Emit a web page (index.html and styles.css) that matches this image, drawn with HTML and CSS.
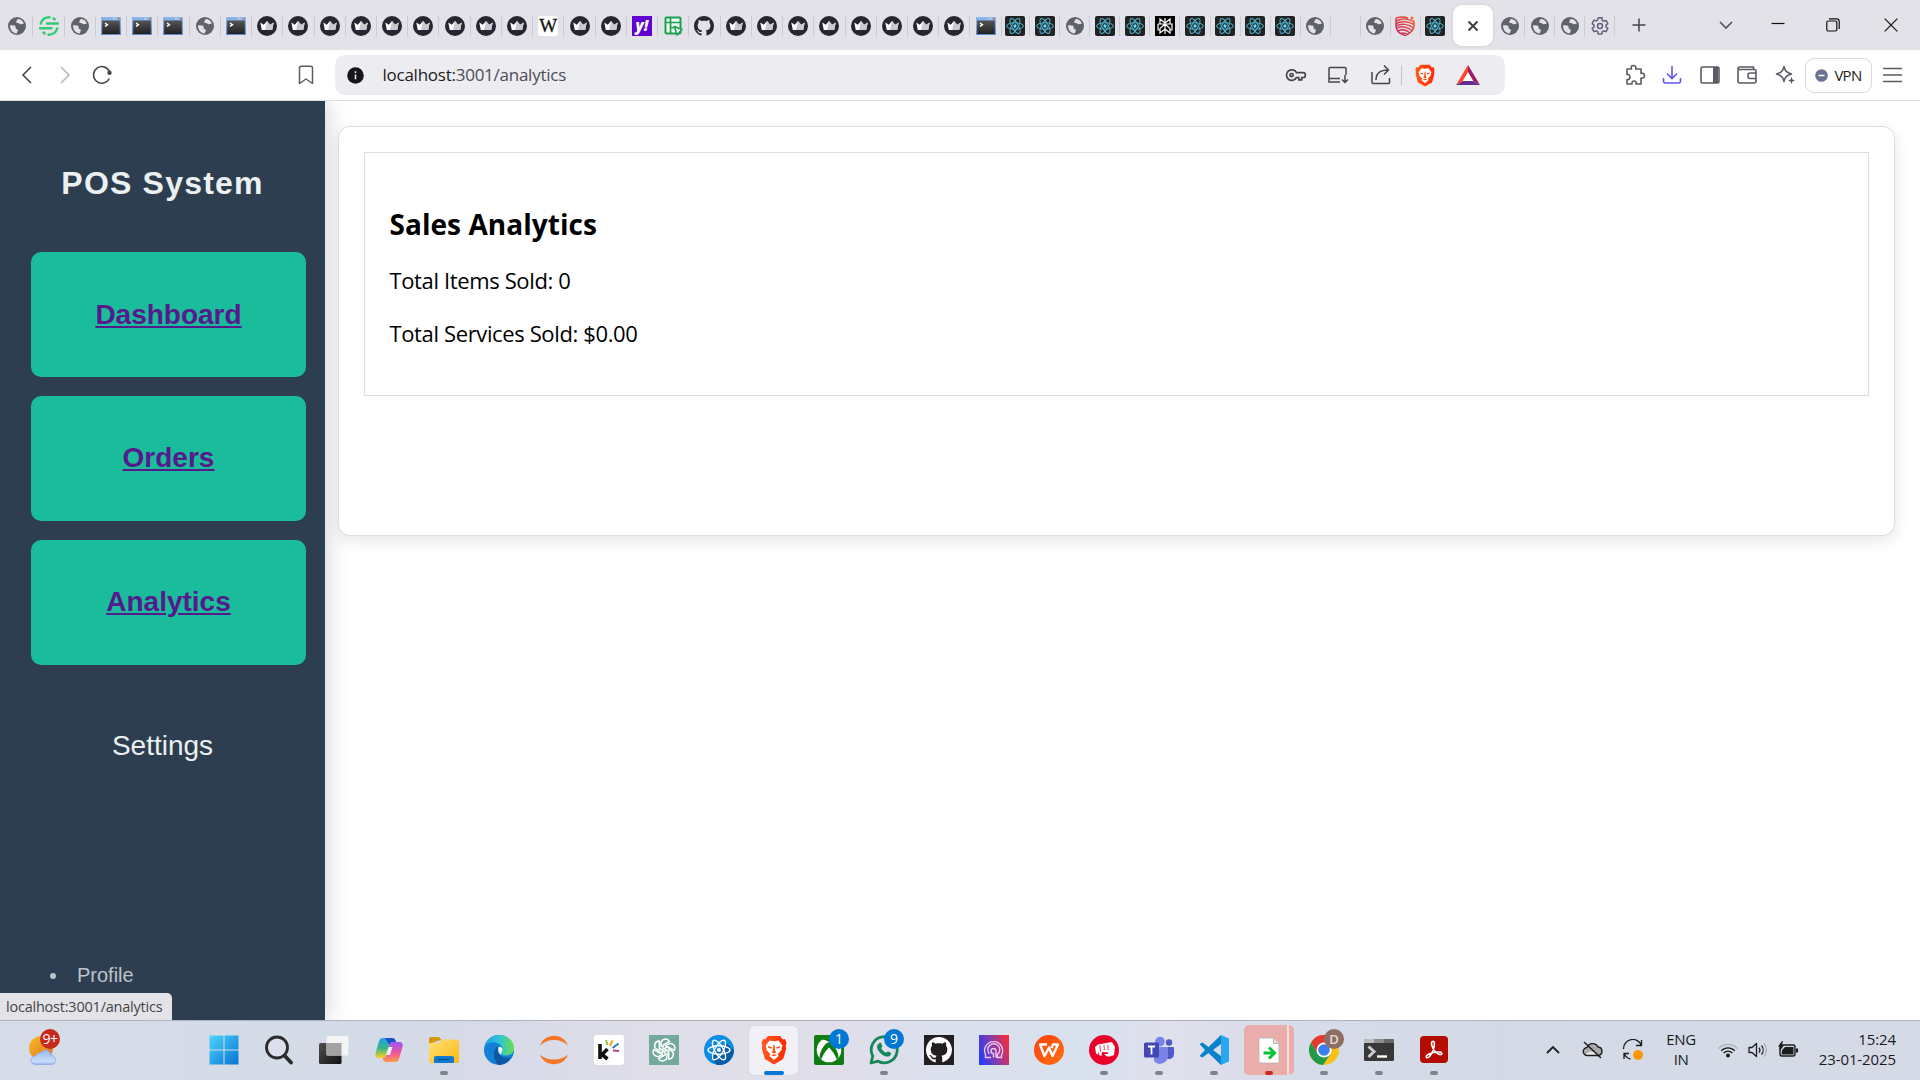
FILE: index.html
```html
<!DOCTYPE html>
<html lang="en">
<head>
<meta charset="utf-8">
<title>POS System - Sales Analytics</title>
<link rel="stylesheet" href="styles.css">
</head>
<body>
<svg class="sprite" width="0" height="0" aria-hidden="true">
  <defs>
    <linearGradient id="g-title" x1="0" x2="0" y1="0" y2="1"><stop offset="0" stop-color="#8db8ee"/><stop offset="1" stop-color="#5d8bd0"/></linearGradient>
    <linearGradient id="g-term" x1="0" x2="0" y1="0" y2="1"><stop offset="0" stop-color="#555"/><stop offset="1" stop-color="#222"/></linearGradient>
    <linearGradient id="g-red" x1="0" x2="1" y1="1" y2="0"><stop offset="0" stop-color="#b52a78"/><stop offset=".5" stop-color="#e24148"/><stop offset="1" stop-color="#fa5f3a"/></linearGradient>
    <linearGradient id="g-win" x1="0" x2="1" y1="0" y2="1"><stop offset="0" stop-color="#4fd5fc"/><stop offset="1" stop-color="#0573d2"/></linearGradient>
    <linearGradient id="g-brave" x1="0" x2="1"><stop offset="0" stop-color="#ff5a1e"/><stop offset="1" stop-color="#ff2a00"/></linearGradient>
    <linearGradient id="g-cop1" x1="0" x2="0" y1="0" y2="1"><stop offset="0" stop-color="#1fa3e8"/><stop offset=".5" stop-color="#35b48c"/><stop offset="1" stop-color="#ffd21e"/></linearGradient>
    <linearGradient id="g-cop2" x1="0" x2="0" y1="0" y2="1"><stop offset="0" stop-color="#9a55f0"/><stop offset=".55" stop-color="#f0559b"/><stop offset="1" stop-color="#ff9a4a"/></linearGradient>
    <linearGradient id="g-fold" x1="0" x2="1" y1="0" y2="1"><stop offset="0" stop-color="#ffe07a"/><stop offset="1" stop-color="#fbb90e"/></linearGradient>
    <linearGradient id="g-edge" x1="0" x2="1"><stop offset="0" stop-color="#1f9fe0"/><stop offset=".5" stop-color="#2bc4d8"/><stop offset="1" stop-color="#69e04c"/></linearGradient>
    <linearGradient id="g-purple" x1="0" x2="1" y1=".6" y2=".3"><stop offset="0" stop-color="#2a3df5"/><stop offset=".5" stop-color="#8a3aa8"/><stop offset="1" stop-color="#f52b3c"/></linearGradient>
    <linearGradient id="g-dark" x1="0" x2="1" y1="0" y2="1"><stop offset="0" stop-color="#505050"/><stop offset="1" stop-color="#111"/></linearGradient>
    <linearGradient id="g-sun" x1="0" x2="1" y1="0" y2="1"><stop offset="0" stop-color="#f5c02e"/><stop offset="1" stop-color="#ea6a10"/></linearGradient>
    <linearGradient id="g-cloud" x1="0" x2="0" y1="0" y2="1"><stop offset="0" stop-color="#8fb4ee"/><stop offset=".5" stop-color="#b9d2f7"/><stop offset=".8" stop-color="#c9dcf8"/><stop offset="1" stop-color="#8fb4ee"/></linearGradient>
    <linearGradient id="g-wps" x1="0" x2="1" y1="0" y2="1"><stop offset="0" stop-color="#ff3d10"/><stop offset="1" stop-color="#ff7410"/></linearGradient>
  </defs>
  <symbol id="globe" viewBox="0 0 20 20"><circle cx="10" cy="10" r="9" fill="#5f6368"/><path d="M3.1 9.2c2.3.3 4.5-.2 5.200.9.8 1.200-.3 1.800.7 2.700 1 .8 2 .3 1.900 1.800-.1 1-1 1.300-1.100 2.900C5.800 17.300 2.700 13.500 3.100 9.200zM10.400 3.100c.5 1.100-1 1.500-1.200 2.700-.1.900.8 1.400 1.900 1.300 1.200 0 1.300 1 2.400 1.100 1 .2 2.100-.6 3.300-.3C16.200 5 13.500 3.100 10.400 3.100z" fill="#e3e2e8"/></symbol>
  <symbol id="term" viewBox="0 0 20 20"><rect x="0" y="1" width="20" height="18" fill="url(#g-title)"/><path d="M12 2.700h2M15 2.700h1" stroke="#dce8f8"/><path d="M17 2.700h1.600" stroke="#e0584a" stroke-width="1.400"/><rect x="1.200" y="4.500" width="17.600" height="13.500" fill="url(#g-term)"/><path d="M4 7l2.500 1.700L4 10.400" fill="none" stroke="#fff" stroke-width="1.400"/></symbol>
  <symbol id="crown" viewBox="0 0 20 20"><circle cx="10" cy="10" r="10" fill="#262632"/><path d="M3.300 6.500l3.500 2.300L10 5l3.200 3.800 3.500-2.300-1.500 7.500H4.800z" fill="#fff"/><path d="M10 5l3.200 3.800 3.500-2.300-1.500 7.500H8z" fill="#c9c9cf"/></symbol>
  <symbol id="react" viewBox="0 0 20 20"><rect width="20" height="20" rx="2" fill="#222"/><g fill="none" stroke="#4fb6d2" stroke-width="1"><ellipse cx="10" cy="10" rx="8.400" ry="3.200"/><ellipse cx="10" cy="10" rx="8.400" ry="3.200" transform="rotate(60 10 10)"/><ellipse cx="10" cy="10" rx="8.400" ry="3.200" transform="rotate(120 10 10)"/></g><circle cx="10" cy="10" r="1.700" fill="#61dafb"/></symbol>
  <symbol id="green-s" viewBox="0 0 20 20"><g fill="none" stroke="#2ecc71" stroke-width="2.400" stroke-linecap="round"><path d="M1.800 7.500C3 3.500 6.500 1.300 10.500 1.300M18.200 12.500c-1.200 4-4.700 6.200-8.700 6.200M8 7.500h11M1 12.300h11.500M14.500 2.500l1.200.8M4.500 16.500l1.100.9"/></g></symbol>
  <symbol id="sheet" viewBox="0 0 20 20"><rect x="2.500" y="1.500" width="15" height="16" rx="1" fill="#eaf8ef" stroke="#1d9f4f" stroke-width="2"/><path d="M3 6.500h14M7.500 2v15M7.500 11.500h5" stroke="#1d9f4f" stroke-width="1.700"/><path d="M11.500 10.500l7.500 3-5 5.500z" fill="#eaf8ef" stroke="#1d9f4f" stroke-width="1.600" stroke-linejoin="round"/></symbol>
  <symbol id="github" viewBox="0 0 16 16"><path fill="currentColor" d="M8 0C3.580 0 0 3.580 0 8c0 3.540 2.290 6.530 5.470 7.590.4.070.55-.17.55-.38 0-.19-.01-.82-.01-1.490-2.010.37-2.530-.49-2.690-.94-.09-.23-.48-.94-.82-1.130-.28-.15-.68-.52-.01-.53.63-.01 1.080.58 1.230.82.72 1.210 1.870.87 2.330.66.070-.52.28-.87.51-1.070-1.780-.2-3.640-.89-3.640-3.950 0-.87.31-1.590.82-2.150-.08-.2-.36-1.020.08-2.120 0 0 .67-.21 2.200.82.640-.18 1.320-.27 2-.27s1.360.09 2 .27c1.530-1.040 2.200-.82 2.200-.82.440 1.100.16 1.920.08 2.120.51.560.82 1.270.82 2.150 0 3.070-1.870 3.750-3.650 3.950.29.25.54.73.54 1.480 0 1.070-.01 1.930-.01 2.200 0 .21.15.46.55.38A8.010 8.010 0 0 0 16 8c0-4.420-3.580-8-8-8z"/></symbol>
  <symbol id="perp" viewBox="0 0 20 20"><rect width="20" height="20" fill="#000"/><path d="M10 2v16M10 7L5 3v4.500M10 7l5-4v4.500M3 8h14v6h-2M3 8v6h2M10 8l-5 4.500V17l5-4M10 8l5 4.500V17l-5-4" fill="none" stroke="#fff" stroke-width="1.200"/></symbol>
  <symbol id="redshield" viewBox="0 0 20 20"><g fill="none" stroke="url(#g-red)" stroke-width="1.500"><path d="M1 2c5-1.500 9-1 12 0M1 5c5-2.500 12-2.500 18 .5M1 7.500c5-3 13-2 18 1M1 10C6 7 14 8 18.500 12M1.500 12.500c4-3 11-2 16 2.500M3 15c4-2.500 8-1.500 12 2M5.500 17.500c2.500-1 5-.5 7 1M1 2v8c0 5 4 8 9 9.500 5-2 9-5 9-10V5"/></g><circle cx="17" cy="2" r="1.500" fill="#fa5f3a"/></symbol>
  <symbol id="gear" viewBox="0 0 24 24"><path d="M19.140 12.940c.04-.3.060-.61.060-.94s-.02-.64-.07-.94l2.030-1.580a.49.49 0 0 0 .12-.61l-1.920-3.320a.49.49 0 0 0-.59-.22l-2.390.96c-.5-.38-1.030-.7-1.620-.94l-.36-2.540A.48.48 0 0 0 13.920 2h-3.840c-.24 0-.43.17-.47.41l-.36 2.540c-.59.24-1.130.57-1.620.94l-2.390-.96a.48.48 0 0 0-.59.22L2.740 8.870a.47.47 0 0 0 .12.61l2.030 1.580a6.100 6.100 0 0 0 0 1.880l-2.030 1.580a.49.49 0 0 0-.12.61l1.920 3.320c.12.22.37.29.59.22l2.390-.96c.5.38 1.030.7 1.620.94l.36 2.540c.05.24.24.41.48.41h3.840c.24 0 .44-.17.47-.41l.36-2.540c.59-.24 1.130-.56 1.620-.94l2.390.96c.22.080.47 0 .59-.22l1.920-3.320a.47.47 0 0 0-.12-.61z" fill="none" stroke="#62617d" stroke-width="1.800"/><circle cx="12" cy="12" r="3" fill="none" stroke="#62617d" stroke-width="1.800"/></symbol>
  <symbol id="brave" viewBox="0 0 26 30"><path d="M7 1h12l3 3.500 2-.5 1.500 4-.8 2.500.5 3-3 10.500L13 29.500 3.800 24 .8 13.500l.5-3L.5 8 2 4l2 .5z" fill="url(#g-brave)"/><path d="M13 6.300l4.500-.8 4 5.200-1 2.300.2 1.800-4 4.400 1 1.800-4.700 4-4.700-4 1-1.800-4-4.400.2-1.800-1-2.300 4-5.200z" fill="#fff"/><path d="M6.800 11l4 1.200-.3 1.600-3-.8zM19.200 11l-4 1.200.3 1.600 3-.8zM12.400 10h1.200l.5 6 1.400 1.300-2.500 1.200-2.500-1.200 1.400-1.300zM10 20.300l3-1 3 1-3 .9z" fill="#ff4a10"/></symbol>
</svg>

<div class="screen">
  <header class="tabstrip">
    <div class="tabs tabs-wide">
      <span class="tab"><svg><use href="#globe"/></svg></span>
      <span class="tab"><svg><use href="#green-s"/></svg></span>
      <span class="tab"><svg><use href="#globe"/></svg></span>
      <span class="tab"><svg><use href="#term"/></svg></span>
      <span class="tab"><svg><use href="#term"/></svg></span>
      <span class="tab"><svg><use href="#term"/></svg></span>
      <span class="tab"><svg><use href="#globe"/></svg></span>
      <span class="tab"><svg><use href="#term"/></svg></span>
      <span class="tab"><svg><use href="#crown"/></svg></span>
      <span class="tab"><svg><use href="#crown"/></svg></span>
      <span class="tab"><svg><use href="#crown"/></svg></span>
      <span class="tab"><svg><use href="#crown"/></svg></span>
      <span class="tab"><svg><use href="#crown"/></svg></span>
      <span class="tab"><svg><use href="#crown"/></svg></span>
      <span class="tab"><svg><use href="#crown"/></svg></span>
      <span class="tab"><svg><use href="#crown"/></svg></span>
      <span class="tab"><svg><use href="#crown"/></svg></span>
      <span class="tab"><span class="fav-wiki">W</span></span>
      <span class="tab"><svg><use href="#crown"/></svg></span>
      <span class="tab"><svg><use href="#crown"/></svg></span>
      <span class="tab"><span class="fav-yahoo">y!</span></span>
      <span class="tab"><svg><use href="#sheet"/></svg></span>
      <span class="tab fav-github"><svg><use href="#github"/></svg></span>
      <span class="tab"><svg><use href="#crown"/></svg></span>
      <span class="tab"><svg><use href="#crown"/></svg></span>
      <span class="tab"><svg><use href="#crown"/></svg></span>
      <span class="tab"><svg><use href="#crown"/></svg></span>
      <span class="tab"><svg><use href="#crown"/></svg></span>
      <span class="tab"><svg><use href="#crown"/></svg></span>
      <span class="tab"><svg><use href="#crown"/></svg></span>
      <span class="tab"><svg><use href="#crown"/></svg></span>
      <span class="tab"><svg><use href="#term"/></svg></span>
    </div>
    <div class="tabs tabs-narrow tabs-before">
      <span class="tab"><svg><use href="#react"/></svg></span>
      <span class="tab"><svg><use href="#react"/></svg></span>
      <span class="tab"><svg><use href="#globe"/></svg></span>
      <span class="tab"><svg><use href="#react"/></svg></span>
      <span class="tab"><svg><use href="#react"/></svg></span>
      <span class="tab"><svg><use href="#perp"/></svg></span>
      <span class="tab"><svg><use href="#react"/></svg></span>
      <span class="tab"><svg><use href="#react"/></svg></span>
      <span class="tab"><svg><use href="#react"/></svg></span>
      <span class="tab"><svg><use href="#react"/></svg></span>
      <span class="tab"><svg><use href="#globe"/></svg></span>
      <span class="tab"></span>
      <span class="tab"><svg><use href="#globe"/></svg></span>
      <span class="tab"><svg><use href="#redshield"/></svg></span>
      <span class="tab tab-noline"><svg><use href="#react"/></svg></span>
    </div>
    <div class="tab-active"><svg width="12" height="12" viewBox="0 0 12 12"><path d="M1.500 1.500l9 9M10.500 1.500l-9 9" stroke="#3b3b45" stroke-width="1.900"/></svg></div>
    <div class="tabs tabs-narrow">
      <span class="tab"><svg><use href="#globe"/></svg></span>
      <span class="tab"><svg><use href="#globe"/></svg></span>
      <span class="tab"><svg><use href="#globe"/></svg></span>
      <span class="tab"><svg><use href="#gear"/></svg></span>
    </div>
    <svg class="new-tab" width="14" height="14" viewBox="0 0 14 14"><path d="M7 .5v13M.5 7h13" stroke="#45454d" stroke-width="1.500"/></svg>
    <div class="window-controls">
      <svg width="14" height="14" viewBox="0 0 14 14"><path d="M1 4l6 6 6-6" fill="none" stroke="#55555c" stroke-width="1.700"/></svg>
      <svg width="14" height="14" viewBox="0 0 14 14"><path d="M.5 5.500h13" stroke="#111" stroke-width="1.200"/></svg>
      <svg width="14" height="14" viewBox="0 0 14 14"><rect x=".8" y="3" width="10" height="10" rx="1.500" fill="none" stroke="#111" stroke-width="1.200"/><path d="M3 .8h7.500a2.700 2.700 0 0 1 2.700 2.700V11" fill="none" stroke="#111" stroke-width="1.200"/></svg>
      <svg width="14" height="14" viewBox="0 0 14 14"><path d="M.7.7l12.600 12.600M13.300.7L.7 13.300" stroke="#111" stroke-width="1.200"/></svg>
    </div>
  </header>

  <nav class="toolbar">
    <div class="nav-buttons">
      <svg width="20" height="20" viewBox="0 0 20 20"><path d="M14 2L6 10l8 8" fill="none" stroke="#45454d" stroke-width="1.600"/></svg>
      <svg width="20" height="20" viewBox="0 0 20 20"><path d="M6 2l8 8-8 8" fill="none" stroke="#b9b9bf" stroke-width="1.600"/></svg>
      <svg width="20" height="20" viewBox="0 0 20 20"><path d="M17.300 13.500A8.300 8.300 0 1 1 17.600 7" fill="none" stroke="#45454d" stroke-width="1.500"/><circle cx="17.500" cy="7.800" r="2.200" fill="#45454d"/></svg>
    </div>
    <svg class="bookmark" width="20" height="20" viewBox="0 0 20 20"><path d="M3.500 18.500V3a1.800 1.800 0 0 1 1.800-1.800h9.400A1.800 1.800 0 0 1 16.500 3v15.500L10 14z" fill="none" stroke="#5b5b63" stroke-width="1.500" stroke-linejoin="round"/></svg>
    <div class="address">
      <svg width="17" height="17" viewBox="0 0 17 17"><circle cx="8.500" cy="8.500" r="8.300" fill="#16161b"/><path d="M8.500 7.500v4.700M8.500 4.200v1.800" stroke="#ededf1" stroke-width="1.600"/></svg>
      <span class="url"><b>localhost:</b>3001/analytics</span>
      <div class="address-actions">
        <svg width="22" height="22" viewBox="0 0 22 22"><g fill="none" stroke="#45454d" stroke-width="1.700"><path d="M11.500 8.700A5.300 5.300 0 1 0 11.500 13.500h2.300v2.300h3v-2.300h1.500a2 2 0 0 0 2-2v-.800a2 2 0 0 0-2-2z"/><circle cx="6.600" cy="11.100" r="1.600"/></g></svg>
        <svg width="22" height="22" viewBox="0 0 22 22"><path d="M19 11V4.500A1 1 0 0 0 18 3.500H3A1 1 0 0 0 2 4.500V18h11M2 14.500h11M18 11v7M15 15.500l3 3 3-3" fill="none" stroke="#45454d" stroke-width="1.500"/></svg>
        <svg width="22" height="22" viewBox="0 0 22 22"><path d="M2 8v10.500a1 1 0 0 0 1 1h15.500a1 1 0 0 0 1-1V14M6 16c0-6 4-10 12-10M14 1.500L18.500 6 14 10.500" fill="none" stroke="#45454d" stroke-width="1.500"/></svg>
      </div>
      <i class="address-line"></i>
      <svg class="brave-btn" width="20" height="23"><use href="#brave"/></svg>
      <svg class="bat" width="24" height="20" viewBox="0 0 24 20"><path d="M12 0L0 20l7-4 5-8.500z" fill="#ff4724"/><path d="M12 0l12 20-7-4-5-8.500z" fill="#9e1f63"/><path d="M0 20h24l-7-4H7z" fill="#662d91"/><path d="M12 7l5.200 9H6.800z" fill="#fff"/></svg>
    </div>
    <div class="extensions">
      <svg width="22" height="22" viewBox="0 0 22 22"><path d="M3 5h4.500C6.500 2 8 1.500 9.500 1.500S12.500 2.500 11.700 5H17v4.500c3-.8 3.500 1 3.500 2.300s-1 3-3.500 2.200V20h-5c.5-2.500-.8-3-2-3s-2.500.8-2 3H3v-4.500c2.300.3 3-1 3-2.500s-1-3-3-2.500z" fill="none" stroke="#5b5b63" stroke-width="1.600" stroke-linejoin="round"/></svg>
      <svg width="22" height="22" viewBox="0 0 22 22"><path d="M11 2v12M6 9.500l5 5 5-5M2.500 14v3a2 2 0 0 0 2 2h13a2 2 0 0 0 2-2v-3" fill="none" stroke="#6159e8" stroke-width="1.600"/></svg>
      <svg width="22" height="22" viewBox="0 0 22 22"><rect x="2" y="3" width="18" height="16" rx="1.500" fill="none" stroke="#5b5b63" stroke-width="1.600"/><path d="M14 3h5v16h-5z" fill="#5b5b63"/></svg>
      <svg width="22" height="22" viewBox="0 0 22 22"><path d="M20 9V7a1.500 1.500 0 0 0-1.500-1.500H2M20 14.500V17a2 2 0 0 1-2 2H4a2 2 0 0 1-2-2V5a2 2 0 0 1 2-2h13.500v2.500M20 9h-6a2 2 0 0 0-2 2v1.500a2 2 0 0 0 2 2h6z" fill="none" stroke="#5b5b63" stroke-width="1.600"/></svg>
      <svg width="22" height="22" viewBox="0 0 22 22"><path d="M10 2.500c1 4.500 2.500 6 7.500 7.500-5 1.500-6.500 3-7.500 7.500C9 13 7.500 11.500 2.500 10 7.500 8.500 9 7 10 2.500z" fill="none" stroke="#5b5b63" stroke-width="1.500" stroke-linejoin="round"/><path d="M17.500 13l1 2.500 2.500 1-2.500 1-1 2.500-1-2.500-2.500-1 2.500-1z" fill="#5b5b63"/></svg>
    </div>
    <div class="vpn"><svg width="13" height="13" viewBox="0 0 13 13"><circle cx="6.500" cy="6.500" r="6.300" fill="#6b7394"/><path d="M3.500 6.500h6" stroke="#fff" stroke-width="1.500"/></svg><span>VPN</span></div>
    <svg class="menu" width="19" height="16" viewBox="0 0 19 16"><path d="M0 1.500h19M0 8h19M0 14.500h19" stroke="#5b5b63" stroke-width="1.500"/></svg>
  </nav>

  <div class="page">
    <aside class="sidebar">
      <h1>POS System</h1>
      <div class="side-cards">
        <div class="side-card"><a href="#">Dashboard</a></div>
        <div class="side-card"><a href="#">Orders</a></div>
        <div class="side-card"><a href="#">Analytics</a></div>
      </div>
      <h3>Settings</h3>
      <ul><li>Profile</li></ul>
      <div class="status">localhost:3001/analytics</div>
    </aside>
    <main class="content">
      <section class="panel">
        <div class="analytics">
          <h2>Sales Analytics</h2>
          <p>Total Items Sold: 0</p>
          <p>Total Services Sold: $0.00</p>
        </div>
      </section>
    </main>
  </div>

  <footer class="taskbar">
    <div class="weather">
      <svg width="36" height="40" viewBox="0 0 36 40"><circle cx="15" cy="22" r="12" fill="url(#g-sun)"/><path d="M10 38.500C3 38.500 3.500 30.500 9.500 30c1-2.500 3-3.500 5-3 3-5 9.500-3.500 10.500 2 6.500 1.500 6.500 9.500-.5 9.500z" fill="url(#g-cloud)" stroke="#86abea" stroke-width=".8"/></svg>
      <span class="weather-badge">9+</span>
    </div>
    <div class="apps">
      <span class="app"><svg width="30" height="30" viewBox="0 0 30 30"><path d="M.5.500h14v14H.5zM15.500.5h14v14h-14zM.5 15.500h14v14H.5zM15.500 15.500h14v14h-14z" fill="url(#g-win)"/></svg></span>
      <span class="app"><svg width="30" height="30" viewBox="0 0 30 30"><circle cx="13" cy="12.500" r="10.500" fill="#dfe3ee" fill-opacity=".6" stroke="#2b2b2b" stroke-width="2.800"/><path d="M20.500 20.500l6.500 7" stroke="#2b2b2b" stroke-width="3.800" stroke-linecap="round"/></svg></span>
      <span class="app"><svg width="30" height="30" viewBox="0 0 30 30"><rect x="0" y="8" width="22.500" height="21" rx="1.500" fill="url(#g-dark)"/><rect x="7.500" y="1" width="22" height="19.500" rx="1.500" fill="#f4f4f4"/><path d="M7.500 8h15v12.500h-15z" fill="#a3a3a3"/></svg></span>
      <span class="app"><svg width="30" height="30" viewBox="0 0 30 30"><path d="M9 3h9c2.500 0 3.500 2 4 4h-3c-2 0-3 1-3.500 3l-3 10c-.6 2-1.500 3-4 3H5c-3 0-4-2-3.400-5L5 6c.7-2 2-3 4-3z" fill="url(#g-cop1)"/><path d="M11 3h7c2.500 0 3.500 2 4 4h-3c-2 0-3 1-3.500 3z" fill="#1b50c8"/><path d="M21 27h-9c-2 0-3-2-3.500-4 2.500 0 3.500-1 4-3l3-10c.6-2 1.500-3 4-3H25c3 0 4.300 2 3.500 5L25 24c-.7 2-2 3-4 3z" fill="url(#g-cop2)"/><path d="M14.500 12h4l-2.500 8h-4z" fill="#eef0f8"/></svg></span>
      <span class="app running"><svg width="30" height="30" viewBox="0 0 30 30"><path d="M0 4a2 2 0 0 1 2-2h8l3 3.500h-3L0 9z" fill="#d9980a"/><path d="M0 8h10l3-3.500h15a2 2 0 0 1 2 2V26a2 2 0 0 1-2 2H2a2 2 0 0 1-2-2z" fill="url(#g-fold)"/><path d="M5 28v-5a2 2 0 0 1 2-2h16a2 2 0 0 1 2 2v5z" fill="#0f7ad0"/><path d="M9 24.500h12" stroke="#0a4f94" stroke-width="1.200"/></svg></span>
      <span class="app"><svg width="30" height="30" viewBox="0 0 30 30"><circle cx="15" cy="15" r="15" fill="#137fd6"/><path d="M.5 12C2 4.500 8 0 15 0c8.500 0 15 6 15 13 0 5-3.500 7.500-8 7.500-3.500 0-5.500-1-5-2.500 1-1.500 1.800-2.500 1.500-4.500C18 10 14 7.500 9.500 7.500 5 7.500 2 9.500.5 12z" fill="url(#g-edge)"/><path d="M10 19c0-4 1.500-6.500 4.500-8-1 2-1 4.500 0 7 2 4.500 7.500 6 12.500 4-2.500 5-7 8-12 8-3-1.500-5-6-5-11z" fill="#0f57a5"/><path d="M14.500 12c2-.5 3.500.5 4 2 .2 1.500-.5 2.700-1.400 4-.3.900.2 1.600 1.200 2-3-.3-5-4-3.800-8z" fill="#eef3fa"/></svg></span>
      <span class="app"><svg width="30" height="30" viewBox="0 0 30 30"><path d="M1 10.500C3 4.500 8.500.7 15 .7s12 3.800 14 9.800C25.500 7 20.500 5 15 5S4.500 7 1 10.500zM1 19.500c2 6 7.500 9.800 14 9.800s12-3.800 14-9.800c-3.500 3.500-8.500 5-14 5s-10.500-1.500-14-5z" fill="#f37726"/></svg></span>
      <span class="app"><svg width="30" height="30" viewBox="0 0 30 30"><rect width="30" height="30" rx="3" fill="#fff"/><path d="M6 9v15M13.500 14L8 19.500l5.500 4.500" fill="none" stroke="#111" stroke-width="3.600"/><path d="M12 5l1.500 5" stroke="#8bc53f" stroke-width="2"/><path d="M18.500 5.500L16 11" stroke="#f7a51c" stroke-width="2"/><path d="M24.500 8.500L18.500 13" stroke="#2b7fc3" stroke-width="2"/><path d="M25 16l-6-.5" stroke="#b8418f" stroke-width="2"/></svg></span>
      <span class="app"><svg width="30" height="30" viewBox="0 0 30 30"><rect width="30" height="30" fill="#74aa9c"/><g fill="none" stroke="#fff" stroke-width="1.500"><path id="petal" d="M12 12.300V8.500a4.500 4.500 0 0 1 8.500-2l-6.500 3.700v4.500"/><use href="#petal" transform="rotate(60 15 15)"/><use href="#petal" transform="rotate(120 15 15)"/><use href="#petal" transform="rotate(180 15 15)"/><use href="#petal" transform="rotate(240 15 15)"/><use href="#petal" transform="rotate(300 15 15)"/></g></svg></span>
      <span class="app"><svg width="30" height="30" viewBox="0 0 30 30"><circle cx="15" cy="15" r="15" fill="#0b8de6"/><path d="M6 22l16-14 8 7a15 15 0 0 1-17 15z" fill="#075da8"/><g fill="none" stroke="#fff" stroke-width="1.400"><ellipse cx="15" cy="15" rx="11" ry="4.200"/><ellipse cx="15" cy="15" rx="11" ry="4.200" transform="rotate(60 15 15)"/><ellipse cx="15" cy="15" rx="11" ry="4.200" transform="rotate(120 15 15)"/></g><circle cx="15" cy="15" r="2" fill="#fff"/></svg></span>
      <span class="app active"><svg width="26" height="30"><use href="#brave"/></svg></span>
      <span class="app"><svg width="30" height="30" viewBox="0 0 30 30"><rect width="30" height="30" rx="2" fill="#107c10"/><circle cx="15" cy="15" r="12.300" fill="#fff"/><path d="M8 4.800c2.500-.5 5 .8 7 2.200 2-1.400 4.500-2.700 7-2.200C20 3 17.500 2.500 15 2.500S10 3 8 4.800zM11.500 9C7.500 13.500 5.500 18.500 5.500 22.500l1.700 2C8.500 20.500 11.500 16 15 12.500c3.500 3.500 6.500 8 7.800 12l1.700-2c0-4-2-9-6-13.500L15 7z" fill="#107c10"/></svg><b class="badge">1</b></span>
      <span class="app running"><svg width="30" height="30" viewBox="0 0 30 30"><path d="M2 28l1.800-7A13 13 0 1 1 9 26.200z" fill="none" stroke="#16865a" stroke-width="2.800" stroke-linejoin="round"/><path d="M10.500 8c1-.4 1.700 0 2 1l.8 2.200c.1.600-.8 1.300-1.200 1.800 1 2.200 2.700 3.800 5 4.800.6-.5 1.200-1.600 1.900-1.400l2.500 1.200c.8.500.5 1.800 0 2.600-2 2.500-6 1-8.500-.8S8.300 14.700 8 12c0-1.500.9-3.400 2.500-4z" fill="#16865a"/></svg><b class="badge">9</b></span>
      <span class="app"><svg class="gh" width="30" height="30" viewBox="0 0 30 30"><rect width="30" height="30" fill="#231f20"/><use href="#github" x="2" y="2" width="26" height="26"/></svg></span>
      <span class="app"><svg width="30" height="30" viewBox="0 0 30 30"><rect width="30" height="30" fill="url(#g-purple)"/><path d="M12 22.500H6.500v-3a9 9 0 1 1 16 .5v2.500h-5M10.500 19a6 6 0 1 1 8 .5v3M14.500 22.500v-4a2.500 2.500 0 1 1 2.500-2.500v6.500" fill="none" stroke="#f3c6ee" stroke-width="1.400"/></svg></span>
      <span class="app"><svg width="30" height="30" viewBox="0 0 30 30"><circle cx="15" cy="15" r="15" fill="url(#g-wps)"/><path d="M13 9.500H6L10.500 21 15 12.500 18.500 21 24 9.500h-5l-1.500 3.500" fill="none" stroke="#fff" stroke-width="2.400" stroke-linejoin="round"/></svg></span>
      <span class="app running"><svg width="30" height="30" viewBox="0 0 30 30"><circle cx="15" cy="15" r="15" fill="#eb0029"/><path d="M6 12l3-2.500L23 7l3 5-1 8-4 1.500h-3L15 19h4v-1.500l-6-.5-.5 4-2.500-1-.5-4-.5 3.500-2-1z" fill="#fff"/><path d="M11 10.500l.5 6M15 10l.3 5M19 9.500V15" stroke="#eb0029" stroke-width=".8"/></svg></span>
      <span class="app running"><svg width="30" height="30" viewBox="0 0 30 30"><circle cx="16" cy="6.500" r="4.800" fill="#7b83eb"/><circle cx="25" cy="7.500" r="3.200" fill="#5059c9"/><path d="M22 12h7a1 1 0 0 1 1 1v6a5 5 0 0 1-8 4z" fill="#5059c9"/><path d="M10 12h14v8a8 8 0 0 1-14 6z" fill="#7b83eb"/><rect x="0" y="7.500" width="15" height="15" rx="1.500" fill="#4248b3"/><path d="M4 11.500h7M7.500 11.500v8" stroke="#fff" stroke-width="1.800"/></svg></span>
      <span class="app running"><svg width="30" height="30" viewBox="0 0 30 30"><path d="M22 0L9.500 12 3.500 7.500.5 9l5.500 6-5.500 6 3 1.500 6-4.500L22 30V21l-8-6 8-6z" fill="#0a82cc"/><path d="M22 0l8 3.500v23L22 30z" fill="#2aa6f2"/></svg></span>
      <span class="app alert"><svg width="30" height="30" viewBox="0 0 30 30"><path d="M5 3h14.500L25 8.500V28H5z" fill="#fff" stroke="#b8b0ac" stroke-width=".8"/><path d="M19.500 3v5.500H25" fill="#ddd" stroke="#aaa" stroke-width=".8"/><path d="M9.500 18h10M15 12.500l5.500 5.500-5.500 5.500" fill="none" stroke="#0ac232" stroke-width="3"/></svg></span>
      <span class="app running"><svg width="30" height="30" viewBox="0 0 30 30"><circle cx="15" cy="15" r="15" fill="#fbc116"/><path d="M2 7.500A15 15 0 0 1 28 7.500H15L8.500 18.700z" fill="#e33b2e"/><path d="M2 7.500A15 15 0 0 0 14 30l7.500-11.300h-13z" fill="#229a4c"/><circle cx="15" cy="15" r="7.500" fill="#fff"/><circle cx="15" cy="15" r="5.800" fill="#3b7ded"/></svg><b class="badge badge-user">D</b></span>
      <span class="app running"><svg width="30" height="30" viewBox="0 0 30 30"><rect x="0" y="4" width="30" height="22" rx="1.500" fill="#383838"/><path d="M0 8V5.500A1.500 1.500 0 0 1 1.500 4H10v4z" fill="#bdbdbd"/><path d="M10 4h10v4H10z" fill="#8d8d8d"/><path d="M20 4h8.500A1.500 1.500 0 0 1 30 5.500V8H20z" fill="#686868"/><path d="M4.500 11.500l5.500 5-5.500 5.500" fill="none" stroke="#ccc" stroke-width="3"/><path d="M13 21.500h10" stroke="#fff" stroke-width="2.400"/></svg></span>
      <span class="app running"><svg width="30" height="30" viewBox="0 0 30 30"><rect x="1" y="1" width="28" height="27" rx="4" fill="#b30b00"/><path d="M13.500 6.500c2.500-1 2.500 3.500.5 9-2 5-4.500 8-6.500 7-1.500-1.500 2-4 7-5 5.500-1.200 9-.3 8.300 1.300-.8 1.700-4.800.2-7.300-3-3-3.800-3.800-8.700-2-9.300z" fill="none" stroke="#fff" stroke-width="1.600"/></svg></span>
    </div>
    <div class="tray">
      <svg class="tray-up" width="14" height="10" viewBox="0 0 14 10"><path d="M1 8l6-6 6 6" fill="none" stroke="#1c1c1c" stroke-width="1.800"/></svg>
      <svg class="tray-cloud" width="22" height="20" viewBox="0 0 22 20"><path d="M5.500 15.500a4 4 0 0 1-.5-8A6 6 0 0 1 16 7a4.300 4.300 0 0 1 .5 8.500z" fill="#aaa" stroke="#1c1c1c" stroke-width="1.400"/><path d="M4 14.500c2-4 8-4 12.500 0z" fill="#e8e8e8"/><path d="M2 2l17 16" stroke="#1c1c1c" stroke-width="1.500"/></svg>
      <svg class="tray-sync" width="22" height="22" viewBox="0 0 22 22"><path d="M1.500 10A9.300 9.300 0 0 1 19.500 6.500M19.500 1v5.500H14M8.500 20A9.300 9.300 0 0 1 2 14.500M2 20v-5.500h5" fill="none" stroke="#1c1c1c" stroke-width="1.300"/><circle cx="16" cy="16" r="5" fill="#ff9800"/></svg>
      <div class="lang"><span>ENG</span><span>IN</span></div>
      <svg class="tray-wifi" width="20" height="16" viewBox="0 0 20 16"><g fill="none" stroke-width="1.300"><path d="M.7 6.500a12.500 12.500 0 0 1 18.600 0" stroke="#a9adb8"/><path d="M3.300 8.800a9 9 0 0 1 13.400 0M5.700 11a6 6 0 0 1 8.600 0" stroke="#1c1c1c"/></g><circle cx="10" cy="13.500" r="2" fill="#1c1c1c"/></svg>
      <svg class="tray-sound" width="20" height="18" viewBox="0 0 20 18"><path d="M1 6.500v5h3l4.500 4V2.500L4 6.500z" fill="none" stroke="#1c1c1c" stroke-width="1.300" stroke-linejoin="round"/><path d="M11 6.500a4 4 0 0 1 0 5M13.500 4.500a7 7 0 0 1 0 9" fill="none" stroke="#1c1c1c" stroke-width="1.200"/><path d="M16 2.500a10 10 0 0 1 0 13" fill="none" stroke="#a9adb8" stroke-width="1.200"/></svg>
      <svg class="tray-bat" width="20" height="18" viewBox="0 0 20 18"><rect x="2" y="4" width="15" height="11" rx="2" fill="none" stroke="#1c1c1c" stroke-width="1.400"/><path d="M4 9L7 6h8.500v7.500h-12zM18 7.500h2v4h-2z" fill="#1c1c1c"/><path d="M4 0L0 5.500h2.300L1.500 10 6 4.500H3.700L5 0z" fill="#1c1c1c"/></svg>
      <div class="clock"><span>15:24</span><span>23-01-2025</span></div>
    </div>
  </footer>
</div>
</body>
</html>
```
FILE: styles.css
```css
* { box-sizing: border-box; }
body { margin: 0; overflow: hidden; font-family: "Segoe UI", "Open Sans", "Noto Sans", sans-serif; }
svg { display: block; flex: none; }
.sprite { position: absolute; }
.screen { display: flex; flex-direction: column; width: 1920px; height: 1080px; background: #fff; }

/* Tab strip */
.tabstrip { display: flex; align-items: center; height: 50px; background: #e3e2e8; padding-left: 2.200px; }
.tabs { display: flex; height: 50px; align-items: center; padding-top: 2px; }
.tab { display: flex; align-items: center; justify-content: center; height: 20px; border-right: 1px solid #cbcad1; }
.tab-noline { border-right-color: transparent; }
.tab svg { width: 20px; height: 20px; }
.tabs-wide .tab { width: 31.240px; }
.tabs-narrow .tab { width: 30.05px; }
.tabs-before { margin-left: -1.500px; }
.fav-wiki { width: 20px; height: 20px; border-radius: 3px; background: #fff; color: #111; font: 19px/20px "Liberation Serif", serif; text-align: center; text-indent: -1px; letter-spacing: -1px; -webkit-text-stroke: .3px #111; }
.fav-yahoo { width: 20px; height: 20px; background: #5f01d1; color: #fff; font: italic 800 15px/18px "Open Sans", sans-serif; text-align: center; }
.fav-github { color: #24292f; }
.tab-active { display: flex; align-items: center; justify-content: center; width: 40px; height: 41px; margin: 1px 2.500px 0 1.700px; border-radius: 9px; background: #fff; box-shadow: 0 0 3px rgba(0, 0, 0, .12); }
.new-tab { margin-left: 16.500px; }
.window-controls { display: flex; align-items: center; margin-left: auto; margin-right: 22px; gap: 44px; }
.window-controls svg:nth-child(2) { margin-left: -6px; }
.window-controls svg:nth-child(3) { margin-left: -3px; }

/* Toolbar */
.toolbar { display: flex; align-items: center; height: 51px; border-bottom: 1px solid #dfdee4; padding-left: 17px; }
.nav-buttons { display: flex; gap: 17.500px; }
.bookmark { margin-left: 184px; }
.address { display: flex; align-items: center; width: 1170px; height: 40px; margin-left: 19px; padding-left: 11.500px; border-radius: 10px; background: #ededf1; }
.url { width: 884px; margin: -2px 0 0 19px; font-size: 17px; letter-spacing: -.25px; color: #4c4c54; white-space: nowrap; }
.url b { font-weight: 400; color: #1b1b20; }
.address-actions { display: flex; gap: 20.500px; margin-left: 18px; }
.address-line { width: 1px; height: 20px; margin: 0 13.500px 0 9px; background: #c4c4ca; }
.bat { margin-left: 21px; }
.extensions { display: flex; gap: 15.600px; margin-left: 118.500px; }
.vpn { display: flex; align-items: center; gap: 6px; width: 67px; height: 35px; margin-left: 9.500px; padding-left: 9px; border: 1px solid #d9d9de; border-radius: 9px; font-size: 15px; letter-spacing: -.7px; color: #1b1b20; }
.vpn span { margin-top: -1px; }
.menu { margin-left: 11px; }

/* POS page */
.page { display: flex; height: 919px; overflow: hidden; }
.sidebar { position: relative; display: flex; flex-direction: column; flex: none; width: 325px; padding: 64px 0 0 31px; background: #2c3e50; box-shadow: 5px 0 19px rgba(0, 0, 0, .14); color: #ecf0f1; font-family: Arial, "Liberation Sans", sans-serif; }
.sidebar h1 { margin: 0 31px 0 0; font-size: 32px; line-height: 37px; letter-spacing: 1.200px; text-align: center; }
.side-cards { display: flex; flex-direction: column; gap: 19px; margin-top: 50px; }
.side-card { display: flex; align-items: center; justify-content: center; width: 275px; height: 125px; padding-bottom: 1px; border-radius: 10px; background: #1abc9c; }
.side-card:first-child { padding-bottom: 0; }
.side-card a { color: #551a8b; font-size: 28px; line-height: 32px; font-weight: bold; }
.sidebar h3 { margin: 65px 31px 0 0; font-size: 28px; line-height: 32px; font-weight: 400; text-align: center; }
.sidebar ul { margin: 202px 0 0; padding-left: 19px; color: #bdc3c7; font-size: 20px; line-height: 23px; list-style: none; }
.sidebar li { display: flex; align-items: center; gap: 21px; }
.sidebar li::before { content: ""; width: 6px; height: 6px; margin-top: 1px; border-radius: 50%; background: #bdc3c7; }
.status { position: absolute; left: 0; bottom: 0; width: 172px; height: 27px; padding-left: 6px; border-radius: 0 5px 0 0; background: #e4e3e8; color: #44444b; font: 14.500px/28px "Segoe UI", "Open Sans", sans-serif; letter-spacing: -.22px; white-space: nowrap; }
.content { flex: 1; padding: 25px 25px 0 13px; }
.panel { position: relative; height: 410px; padding: 25px; border: 1px solid #ddd; border-radius: 12px; background: #fff; box-shadow: 0 5px 15px rgba(0, 0, 0, .1); }
.analytics { height: 244px; padding: 51px 24.500px 0; border: 1px solid #ddd; color: #000; }
.analytics h2 { margin: 0 0 21px; font-size: 28px; line-height: 40px; letter-spacing: .050px; }
.analytics p { margin: 0 0 23px; font-size: 22px; line-height: 30px; letter-spacing: -.37px; }

/* Taskbar */
.taskbar { display: flex; height: 60px; border-top: 1px solid #aeb0bb; background: linear-gradient(90deg, #d6dde8 0, #d3dbe7 18%, #d8dae8 26%, #e0dfe9 36%, #e0deea 43%, #dae1ed 50%, #d9e1ee 58%, #dfe0eb 61%, #d6dce9 68%, #d3dae6 78%, #d6dae7 100%); }
.weather { position: relative; width: 196px; padding: 5px 0 0 26px; }
.weather-badge { position: absolute; left: 40px; top: 8px; width: 20px; height: 20px; border-radius: 50%; background: #c42b1c; color: #fff; font-size: 14px; line-height: 19px; text-align: center; letter-spacing: -.5px; }
.apps { display: flex; }
.app { position: relative; display: flex; align-items: center; justify-content: center; width: 55px; height: 58px; }
.app svg { position: relative; }
.app svg.gh { color: #fff; }
.running::after, .active::after, .alert::after { content: ""; position: absolute; left: 23.500px; bottom: 4px; width: 8px; height: 4px; border-radius: 2px; background: #7f828a; }
.active::before { content: ""; position: absolute; left: 3px; top: 5px; width: 49px; height: 49px; border-radius: 5px; background: #f2f0f7; box-shadow: 0 0 1px #aaa; }
.active::after { left: 17.500px; width: 20px; background: #0078d4; }
.alert::before { content: ""; position: absolute; left: 2.500px; top: 4px; width: 50px; height: 50px; border-radius: 5px; background: linear-gradient(90deg, #e9aeab 43px, #f3dfe0 43px, #f3dfe0 45px, #e9aeab 45px); }
.alert::after { background: #c42b1c; }
.badge { position: absolute; right: 7px; top: 8px; width: 20px; height: 20px; border-radius: 50%; background: #0078d4; color: #fff; font-size: 14px; font-weight: 400; line-height: 20px; text-align: center; }
.badge-user { background: #8d6e63; color: #e6dcd8; font-size: 13px; font-weight: 600; }
.tray { display: flex; align-items: center; height: 58px; margin-left: auto; padding-right: 24px; font-size: 15px; line-height: 20px; color: #1b1b1b; }
.lang, .clock { display: flex; flex-direction: column; margin-top: -2px; }
.lang { align-items: center; width: 50px; margin: -2px 12px 0; letter-spacing: -.4px; }
.clock { align-items: flex-end; width: 80px; margin-left: 17px; letter-spacing: -.1px; }
.tray-cloud { margin-left: 22px; }
.tray-sync { margin-left: 18px; }
.tray-sound { margin-left: 10px; }
.tray-bat { margin-left: 10px; margin-right: 1px; }
```
